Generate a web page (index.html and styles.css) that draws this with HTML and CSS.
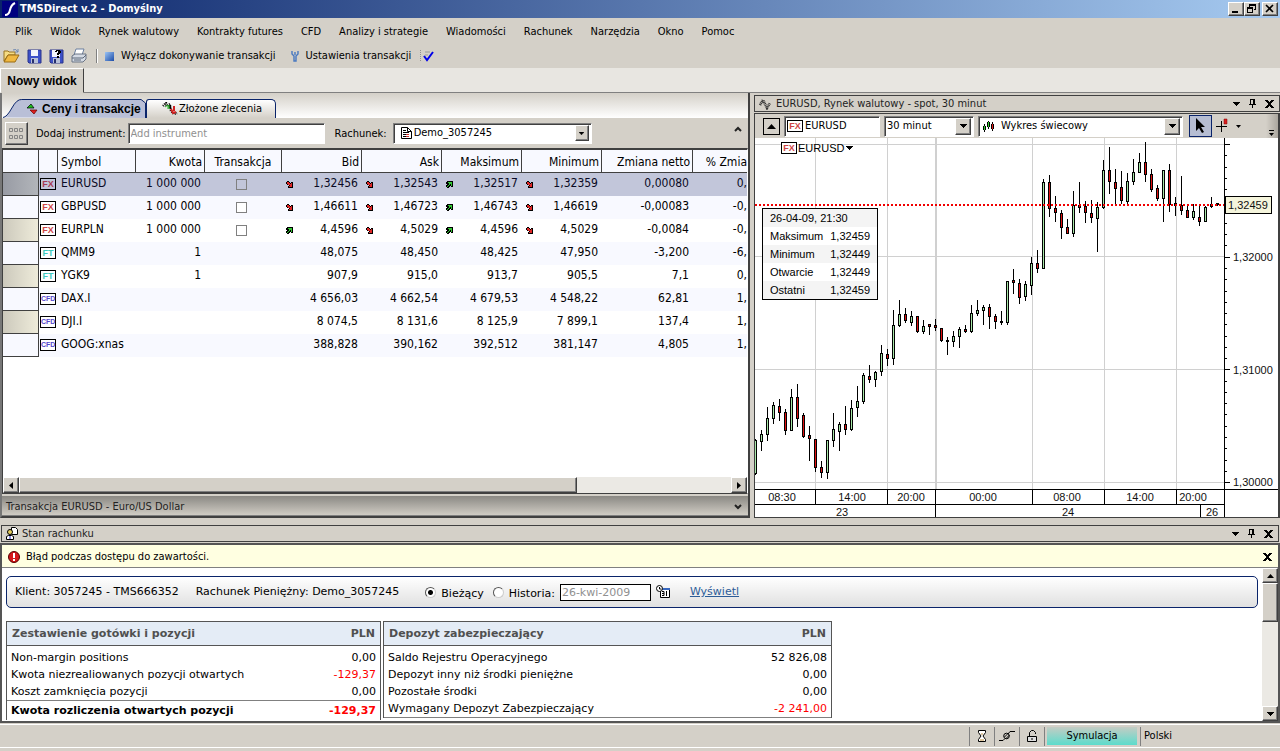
FILE: index.html
```html
<!DOCTYPE html>
<html lang="pl">
<head>
<meta charset="utf-8">
<title>TMSDirect v.2 - Domyślny</title>
<link rel="stylesheet" href="styles.css">
</head>
<body>
<svg class="defs" width="0" height="0" aria-hidden="true">
  <symbol id="down" viewBox="0 0 7 7"><path d="M1 0h2v1h1v1h1V1h2v6H2V5h1V4H1V3H0V1h1z" fill="#000"/><path d="M1 1h2v1h1v1h1V2h1v4H3V5h1V4H2V3H1z" fill="#e02828"/></symbol>
  <symbol id="up" viewBox="0 0 7 7"><path d="M1 0h6v6H5V5H4v1H3v1H1V6H0V4h1V3H0V1h1z" fill="#000"/><path d="M2 1h4v4H5V3H4v1H3v1H2v1H1V5h1V4h1V2H2z" fill="#32c832"/></symbol>
  <symbol id="tri" viewBox="0 0 7 4"><path d="M0 0h7v1H6v1H5v1H4v1H3V3H2V2H1V1H0z"/></symbol>
  <symbol id="x" viewBox="0 0 9 8"><path d="M0 0h3v1h1v1h1V1h1V0h3v1H8v1H7v1H6v2h1v1h1v1h1v1H6V7H5V6H4v1H3v1H0V7h1V6h1V5h1V3H2V2H1V1H0z"/></symbol>
  <symbol id="pin" viewBox="0 0 7 9"><path d="M1 0h5v5h1v1H4v3H3V6H0V5h1zM2 1v4h2V1z"/></symbol>
  <symbol id="candles" viewBox="0 0 12 11"><path d="M1 3h1v2h1v4H2v2H1V9H0V5h1zM5 0h1v1h1v5H6v2H5V6H4V1h1zM9 1h1v2h1v5h-1v2H9V8H8V3h1z"/><path d="M1 5h1v4H1zM5 1h1v5H5z" fill="#2fd02f"/><path d="M9 3h1v5H9z" fill="#e02020"/></symbol>
</svg>

<header class="titlebar">
  <svg class="logo" viewBox="0 0 16 16"><rect width="16" height="16" fill="#000080"/><path d="M3 14Q7 14 8 9T13 2" fill="none" stroke="#fff" stroke-width="2"/></svg>
  <h1>TMSDirect v.2 - Domyślny</h1>
  <div class="winbtns">
    <button class="btn" aria-label="Minimalizuj"><svg width="12" height="10" viewBox="0 0 12 10"><path d="M2 7h6v2H2z"/></svg></button>
    <button class="btn" aria-label="Przywróć"><svg width="12" height="10" viewBox="0 0 12 10"><path d="M3 0h7v6H8V5h1V2H4v1H3zM1 3h6v6H1zM2 5v3h4V5z" fill-rule="evenodd"/></svg></button>
    <button class="btn close" aria-label="Zamknij"><svg width="12" height="10" viewBox="0 0 12 10"><path d="M2 1l7 7M9 1L2 8" stroke="#000" stroke-width="1.6"/></svg></button>
  </div>
</header>

<nav class="menu">
  <button>Plik</button><button>Widok</button><button>Rynek walutowy</button><button>Kontrakty futures</button><button>CFD</button><button>Analizy i strategie</button><button>Wiadomości</button><button>Rachunek</button><button>Narzędzia</button><button>Okno</button><button>Pomoc</button>
</nav>

<div class="toolbar">
  <button aria-label="Otwórz"><svg width="17" height="16" viewBox="0 0 17 16"><path d="M1 3h4l1 1h6v3H5L1 13z" fill="#f5dc84" stroke="#9a7420"/><path d="M5 7h11l-4 7H1z" fill="#f0b840" stroke="#9a6c14"/><path d="M10 2q3-2 5 2M15 1v3h-3" fill="none" stroke="#6d87b0"/></svg></button>
  <button aria-label="Zapisz"><svg width="15" height="15" viewBox="0 0 15 15"><path d="M1 1h13v13H2l-1-1z" fill="#3c50c8" stroke="#2a348c"/><path d="M4 1h7v6H4z" fill="#f2f4fc"/><path d="M4 9h7v5H4z" fill="#b8c0d8"/><path d="M5 10h2v4H5z" fill="#27306e"/></svg></button>
  <button aria-label="Zapisz jako"><svg width="15" height="15" viewBox="0 0 15 15"><path d="M1 1h13v13H2l-1-1z" fill="#3c50c8" stroke="#2a348c"/><path d="M3 1h8v7H3z" fill="#f2f4fc"/><path d="M4 9h7v5H4z" fill="#b8c0d8"/><path d="M5 10h2v4H5z" fill="#27306e"/><path d="M7 1h4v1h1v2h-1v1h-1v1H8V4h1V2H8v1H6V2h1zM8 7h2v2H8z"/></svg></button>
  <button aria-label="Drukuj"><svg width="16" height="16" viewBox="0 0 16 16"><path d="M5 1h8l-2 6H3z" fill="#fff" stroke="#6b7f9f"/><path d="M1 8l3-2h11v5l-3 3H1z" fill="#d4dae4" stroke="#6a7484"/><path d="M1 10h11l3-3M3 12h7" fill="none" stroke="#5c6878"/></svg></button>
  <span class="sep"></span>
  <button><svg width="9" height="9" viewBox="0 0 9 9"><defs><linearGradient id="sq" x2="1" y2="1"><stop stop-color="#9cc4f4"/><stop offset="1" stop-color="#1c4ca8"/></linearGradient></defs><rect width="9" height="9" fill="url(#sq)"/></svg><span>Wyłącz dokonywanie transakcji</span></button>
  <button class="settings"><svg width="8" height="11" viewBox="0 0 8 11"><path d="M1 0v3l2 2v5h2V5l2-2V0M4 1v3" fill="none" stroke="#4878c0" stroke-width="1.4"/></svg><span>Ustawienia transakcji</span></button>
  <button class="check" aria-label="Sprawdź"><svg width="14" height="12" viewBox="0 0 14 12"><path d="M.5 0v12" stroke="#909090" stroke-dasharray="1 1"/><path d="M5 2h5M5 5h3" stroke="#999"/><path d="M4 6l3 4 6-8" fill="none" stroke="#0000e8" stroke-width="2"/></svg></button>
</div>

<div class="views"><button>Nowy widok</button></div>

<main class="work">
  <section class="prices">
    <div class="tabs">
      <button class="tab active"><svg class="shape" viewBox="0 0 145 19" preserveAspectRatio="none"><path d="M0 18.500Q4 18 9 9T19 .5H140L144.500 4V19" fill="#b9bfd7" stroke="#0a246a"/></svg><svg width="12" height="12" viewBox="0 0 12 12"><path d="M1 5l4-4 3 4z" fill="#20c020" stroke="#000" stroke-width=".7"/><path d="M4 7h7l-3 4z" fill="#e02020" stroke="#600"  stroke-width=".7"/></svg><span>Ceny i transakcje</span></button>
      <button class="tab"><svg width="16" height="14" viewBox="0 0 16 14"><path d="M1 4l3-3 1 3 3-2v5M8 4l1 5 3 3 3-1" fill="none" stroke="#000" stroke-width="2.400" stroke-dasharray="1 1"/><path d="M3 5l3-2v4M7 3v4" fill="none" stroke="#27b427"/><path d="M9 7l2 4 3-1M12 4v5" fill="none" stroke="#d02020" stroke-width="2"/></svg><span>Złożone zlecenia</span></button>
    </div>
    <div class="filters">
      <button class="btn grid-btn" aria-label="Siatka"><svg width="15" height="13" viewBox="0 0 15 13"><path d="M.5 1.500h3v3h-3zM5.500 1.500h3v3h-3zM10.500 1.500h3v3h-3zM.5 8.500h3v3h-3zM5.500 8.500h3v3h-3zM10.500 8.500h3v3h-3z" fill="none" stroke="#858585"/></svg></button>
      <label for="add">Dodaj instrument:</label>
      <input id="add" class="sunk" type="text" placeholder="Add instrument">
      <label for="acc">Rachunek:</label>
      <div class="combo acc"><svg width="11" height="12" viewBox="0 0 11 12"><path d="M.5.5h6l4 4v7H.5zM6.500.5v4h4" fill="#fff" stroke="#000"/><path d="M2 3.500h3M2 5.500h6M2 7.500h3M2 9.500h3" stroke="#000"/><path d="M5 7.500h3M5 9.500h3" stroke="#d03030"/></svg><select id="acc"><option>Demo_3057245</option></select><span class="btn"><svg width="5" height="3" viewBox="0 0 7 4"><use href="#tri"/></svg></span></div>
      <button class="collapse" aria-label="Zwiń"><svg width="8" height="6" viewBox="0 0 8 6"><path d="M1 5l3-3 3 3" fill="none" stroke="#222" stroke-width="2"/></svg></button>
    </div>
    <div class="sheet">
      <table class="quotes">
        <colgroup><col class="c-head"><col class="c-ico"><col class="c-sym"><col class="c-amt"><col class="c-tr"><col class="c-q"><col class="c-q"><col class="c-q"><col class="c-q"><col class="c-net"><col></colgroup>
        <thead><tr><th></th><th></th><th class="l">Symbol</th><th>Kwota</th><th class="c">Transakcja</th><th>Bid</th><th>Ask</th><th>Maksimum</th><th>Minimum</th><th>Zmiana netto</th><th>% Zmia</th></tr></thead>
        <tbody>
        <tr class="sel"><td></td><td><i class="badge fx">FX</i></td><td class="l">EURUSD</td><td>1 000 000</td><td class="c"><input type="checkbox" aria-label="EURUSD"></td><td><svg><use href="#down"/></svg>1,32456</td><td><svg><use href="#down"/></svg>1,32543</td><td><svg><use href="#up"/></svg>1,32517</td><td><svg><use href="#down"/></svg>1,32359</td><td>0,00080</td><td>0,</td></tr>
        <tr><td></td><td><i class="badge fx">FX</i></td><td class="l">GBPUSD</td><td>1 000 000</td><td class="c"><input type="checkbox" aria-label="GBPUSD"></td><td><svg><use href="#down"/></svg>1,46611</td><td><svg><use href="#down"/></svg>1,46723</td><td><svg><use href="#up"/></svg>1,46743</td><td><svg><use href="#down"/></svg>1,46619</td><td>-0,00083</td><td>-0,</td></tr>
        <tr><td></td><td><i class="badge fx">FX</i></td><td class="l">EURPLN</td><td>1 000 000</td><td class="c"><input type="checkbox" aria-label="EURPLN"></td><td><svg><use href="#up"/></svg>4,4596</td><td><svg><use href="#down"/></svg>4,5029</td><td><svg><use href="#up"/></svg>4,4596</td><td><svg><use href="#down"/></svg>4,5029</td><td>-0,0084</td><td>-0,</td></tr>
        <tr><td></td><td><i class="badge ft">FT</i></td><td class="l">QMM9</td><td>1</td><td></td><td>48,075</td><td>48,450</td><td>48,425</td><td>47,950</td><td>-3,200</td><td>-6,</td></tr>
        <tr><td></td><td><i class="badge ft">FT</i></td><td class="l">YGK9</td><td>1</td><td></td><td>907,9</td><td>915,0</td><td>913,7</td><td>905,5</td><td>7,1</td><td>0,</td></tr>
        <tr><td></td><td><i class="badge cfd">CFD</i></td><td class="l">DAX.I</td><td></td><td></td><td>4 656,03</td><td>4 662,54</td><td>4 679,53</td><td>4 548,22</td><td>62,81</td><td>1,</td></tr>
        <tr><td></td><td><i class="badge cfd">CFD</i></td><td class="l">DJI.I</td><td></td><td></td><td>8 074,5</td><td>8 131,6</td><td>8 125,9</td><td>7 899,1</td><td>137,4</td><td>1,</td></tr>
        <tr><td></td><td><i class="badge cfd">CFD</i></td><td class="l">GOOG:xnas</td><td></td><td></td><td>388,828</td><td>390,162</td><td>392,512</td><td>381,147</td><td>4,805</td><td>1,</td></tr>
        </tbody>
      </table>
      <div class="hscroll"><button class="btn" aria-label="W lewo"><svg width="4" height="7" viewBox="0 0 4 7"><path d="M4 0v7L0 3.500z"/></svg></button><span class="btn thumb"></span><button class="btn end" aria-label="W prawo"><svg width="4" height="7" viewBox="0 0 4 7"><path d="M0 0v7l4-3.500z"/></svg></button></div>
    </div>
    <button class="trade"><span>Transakcja EURUSD - Euro/US Dollar</span><svg width="8" height="6" viewBox="0 0 8 6"><path d="M1 1l3 3 3-3" fill="none" stroke="#222" stroke-width="2"/></svg></button>
  </section>

  <section class="chart">
    <div class="caption"><svg width="13" height="12" viewBox="0 0 13 12"><path d="M1 7l3-5 4 8 3-5" fill="none" stroke="#333" stroke-width="2.600" stroke-dasharray="1 .6"/></svg><h2>EURUSD, Rynek walutowy - spot, 30 minut</h2>
      <button aria-label="Menu"><svg width="7" height="4"><use href="#tri"/></svg></button><button aria-label="Przypnij"><svg width="7" height="9"><use href="#pin"/></svg></button><button aria-label="Zamknij"><svg width="9" height="8"><use href="#x"/></svg></button></div>
    <div class="pane">
      <div class="chartbar">
        <button class="flat" aria-label="W górę"><svg width="9" height="5" viewBox="0 0 9 5"><path d="M4.500 0L9 5H0z"/></svg></button>
        <div class="combo sym"><i class="badge fx">FX</i><input type="text" value="EURUSD" aria-label="Instrument"></div>
        <div class="combo per"><select aria-label="Okres"><option>30 minut</option></select><span class="btn"><svg width="7" height="4"><use href="#tri"/></svg></span></div>
        <div class="combo kind"><svg width="12" height="11"><use href="#candles"/></svg><select aria-label="Typ wykresu"><option>Wykres świecowy</option></select><span class="btn"><svg width="7" height="4"><use href="#tri"/></svg></span></div>
        <button class="pointer" aria-label="Wskaźnik"><svg width="11" height="16" viewBox="0 0 11 16"><path d="M1 0l9 9H6l3 5-2 1-3-5-3 3z"/></svg></button>
        <button class="cross" aria-label="Krzyż"><svg width="25" height="16" viewBox="0 0 25 16"><path d="M0 8.500h11M5.500 3v11" stroke="#000"/><path d="M8 1h3v5H8z" fill="#d82020" stroke="#800" stroke-width=".5"/><path d="M20 7h5l-2.500 3z"/></svg></button>
        <button class="more" aria-label="Więcej"><svg width="5" height="7" viewBox="0 0 5 7"><path d="M0 0h5v1H0zM0 3h5L2.500 6z"/></svg></button>
      </div>
      <div class="plot">
        <svg id="plot" viewBox="0 0 523 381" preserveAspectRatio="xMinYMin meet" shape-rendering="crispEdges">
          <path class="grid" d="M0 6.500h469M0 118.500h469M0 231.500h469M0 344.500h469M60.500 0v351M132.500 0v351M277.500 0v351M349.500 0v351M421.500 0v351"/>
          <path class="grid day" d="M181 0v351"/>
          <g id="candle-layer"></g>
          <path class="last" d="M0 67h470"/>
          <path class="axis" d="M469.500 0v381M0 351.500h523M0 366.500h469M60.500 351v15M132.500 351v15M180.500 351v30M277.500 351v15M349.500 351v15M421.500 351v15M445.500 366v15"/>
          <path class="axis" id="ticks" d=""/>
          <rect x="470.500" y="58.500" width="46" height="17" fill="#f5f5dc" stroke="#000"/>
          <g class="price"><text x="473" y="71">1,32459</text><text x="478" y="123">1,32000</text><text x="478" y="236">1,31000</text><text x="478" y="348">1,30000</text></g>
          <g class="time"><text x="27" y="363">08:30</text><text x="97" y="363">14:00</text><text x="156" y="363">20:00</text><text x="228" y="363">00:00</text><text x="312" y="363">08:00</text><text x="385" y="363">14:00</text><text x="438" y="363">20:00</text><text x="87" y="378">23</text><text x="313" y="378">24</text><text x="457" y="378">26</text></g>
        </svg>
        <button class="series"><i class="badge fx">FX</i><span>EURUSD</span><svg width="7" height="4"><use href="#tri"/></svg></button>
        <dl class="tip"><div><dt>26-04-09, 21:30</dt></div><div><dt>Maksimum</dt><dd>1,32459</dd></div><div><dt>Minimum</dt><dd>1,32449</dd></div><div><dt>Otwarcie</dt><dd>1,32449</dd></div><div><dt>Ostatni</dt><dd>1,32459</dd></div></dl>
      </div>
    </div>
  </section>
</main>

<section class="account">
  <div class="caption"><svg width="12" height="13" viewBox="0 0 12 13"><path d="M5.500.5h4l2 2v5h-6z" fill="#fff" stroke="#000"/><circle cx="4" cy="5" r="2.500" fill="#e8d060" stroke="#000"/><path d="M.5 12.500v-3l2-1h3l2 1v3z" fill="#fff" stroke="#000"/><path d="M4 9v3" stroke="#22c"/></svg><h2>Stan rachunku</h2>
    <button aria-label="Menu"><svg width="7" height="4"><use href="#tri"/></svg></button><button aria-label="Przypnij"><svg width="7" height="9"><use href="#pin"/></svg></button><button aria-label="Zamknij"><svg width="9" height="8"><use href="#x"/></svg></button></div>
  <div class="body">
    <div class="alert" role="alert"><svg width="12" height="12" viewBox="0 0 12 12"><circle cx="6" cy="6" r="5.500" fill="#d41818" stroke="#500"/><path d="M5 2h2v5H5zM5 8h2v2H5z" fill="#fff"/></svg><span>Błąd podczas dostępu do zawartości.</span><button aria-label="Zamknij"><svg width="9" height="8"><use href="#x"/></svg></button></div>
    <div class="scroller">
      <div class="content">
        <form class="query">
          <span>Klient: 3057245 - TMS666352</span><span>Rachunek Pieniężny: Demo_3057245</span>
          <label class="cur"><input type="radio" name="r" checked>Bieżący</label><label><input type="radio" name="r">Historia:</label>
          <input class="date" type="text" placeholder="26-kwi-2009" aria-label="Data">
          <button type="button" aria-label="Kalendarz"><svg width="14" height="14" viewBox="0 0 14 14"><path d="M4.500 3.500h9v9h-9z" fill="#fff" stroke="#000"/><path d="M5 3h9v2H5z" fill="#3868c0"/><path d="M6 6.500h2v4H6M6 8.500h2M10.500 6v5" fill="none" stroke="#000"/><circle cx="3.500" cy="3.500" r="3" fill="#fff" stroke="#000"/><path d="M3.500 2v2h2" fill="none" stroke="#000"/></svg></button>
          <a href="#">Wyświetl</a>
        </form>
        <div class="tables">
          <table class="cash"><thead><tr><th>Zestawienie gotówki i pozycji</th><th>PLN</th></tr></thead><tbody>
            <tr><td>Non-margin positions</td><td>0,00</td></tr>
            <tr><td>Kwota niezrealiowanych pozycji otwartych</td><td class="neg">-129,37</td></tr>
            <tr><td>Koszt zamknięcia pozycji</td><td>0,00</td></tr>
            <tr class="sum"><td>Kwota rozliczenia otwartych pozycji</td><td class="neg">-129,37</td></tr></tbody></table>
          <table class="margin"><thead><tr><th>Depozyt zabezpieczający</th><th>PLN</th></tr></thead><tbody>
            <tr><td>Saldo Rejestru Operacyjnego</td><td>52 826,08</td></tr>
            <tr><td>Depozyt inny niż środki pieniężne</td><td>0,00</td></tr>
            <tr><td>Pozostałe środki</td><td>0,00</td></tr>
            <tr class="line"><td>Wymagany Depozyt Zabezpieczający</td><td class="neg">-2 241,00</td></tr></tbody></table>
        </div>
      </div>
      <div class="vscroll"><button class="btn" aria-label="W górę"><svg width="7" height="4" viewBox="0 0 7 4"><path d="M3.500 0L7 4H0z"/></svg></button><span class="btn thumb"></span><button class="btn end" aria-label="W dół"><svg width="7" height="4"><use href="#tri"/></svg></button></div>
    </div>
  </div>
</section>

<footer class="status">
  <span class="cell"><svg width="8" height="12" viewBox="0 0 8 12"><path d="M.5.5h7v2l-2.500 3.500 2.500 3.500v2h-7v-2L3 6 .5 2.500z" fill="#fff" stroke="#000"/><path d="M3 4h2M2 10h4" stroke="#c09040"/></svg></span>
  <span class="cell"><svg width="16" height="12" viewBox="0 0 16 12"><path d="M0 10.500h4l2-2M9 4l2-2.500h5M5.500 7l3-3M6.500 9l4-4" fill="none" stroke="#000"/><circle cx="7.500" cy="6" r="2.800" fill="none" stroke="#000"/></svg></span>
  <span class="cell"><svg width="11" height="13" viewBox="0 0 11 13"><path d="M2.500 7V2.500l2-2h2l2 2V4" fill="none" stroke="#000"/><path d="M.5 6.500h9v5h-9z" fill="#ddd" stroke="#000"/><path d="M5 8v2" stroke="#000"/></svg></span>
  <span class="cell wide"><b>Symulacja</b></span>
  <span class="cell lang">Polski</span>
</footer>
<script src="chart.js"></script>
</body>
</html>
```

FILE: styles.css
```css
:root {
  --face: #d4d0c8;
  --dark: #404040;
  --mid: #808080;
  --navy: #0a246a;
  --ui: "DejaVu Sans Condensed", "Noto Sans", sans-serif;
  --wide: "DejaVu Sans", sans-serif;
  --plain: "Liberation Sans", sans-serif;
}
* { box-sizing: border-box; }
body {
  margin: 0; min-height: 100vh; overflow: hidden;
  display: flex; flex-direction: column;
  background: var(--face); color: #000;
  font: 11px/14px var(--ui);
}
button, input, select { font: inherit; color: inherit; }
button { margin: 0; padding: 0; border: 0; background: none; white-space: nowrap; }
h1, h2, dl, dd { margin: 0; font: inherit; }
svg { display: block; flex: none; }
.defs { position: absolute; }
.btn {
  display: flex; align-items: center; justify-content: center; flex: none;
  background: var(--face);
  border: 1px solid; border-color: #fff var(--dark) var(--dark) #fff;
  box-shadow: inset -1px -1px var(--mid);
}
.badge {
  display: block; flex: none; width: 16px; height: 12px;
  border: 1px solid #000; background: #fff;
  font: bold 9px/10px var(--plain); text-align: center;
}
.fx { color: #cf4646; }
.ft { color: #3fc9bd; }
.cfd { color: #5548cc; font-size: 7px; }

.titlebar {
  display: flex; align-items: center; height: 18px; padding: 0 2px;
  background: linear-gradient(90deg, #0a246a, #a6caf0);
}
.logo { width: 16px; height: 16px; }
.titlebar h1 { flex: 1; padding-left: 2px; color: #fff; font-weight: bold; }
.winbtns { display: flex; }
.winbtns .btn { width: 16px; height: 14px; }
.winbtns .close { margin-left: 2px; }

.menu { display: flex; gap: 18px; height: 26px; padding: 2px 15px 0; align-items: center; }
.toolbar { display: flex; align-items: center; height: 24px; gap: 7px; padding: 0 3px; }
.toolbar button { display: flex; align-items: center; gap: 7px; }
.toolbar .sep { width: 2px; height: 14px; margin-left: 2px; background: linear-gradient(90deg, var(--mid) 50%, #fff 50%); }
.toolbar .settings { margin-left: 8px; }
.toolbar .check { margin-left: 2px; }

.views { display: flex; height: 25px; background: #e8e6e1; }
.views::after { content: ""; flex: 1; border-bottom: 1px solid var(--mid); }
.views button {
  width: 84px; background: var(--face); font: bold 12px/14px var(--plain);
  border: 1px solid; border-color: #fff var(--dark) transparent #fff;
}

.work {
  flex: 1 1 0; display: grid; gap: 4px; min-height: 0;
  grid-template-columns: 750fr 526fr; grid-template-rows: minmax(0, 1fr);
}
.prices {
  display: flex; flex-direction: column; min-width: 0; min-height: 0;
  border: solid var(--dark); border-width: 0 2px 2px 2px; border-left-color: #777;
}
.tabs {
  display: flex; align-items: flex-end; height: 25px; padding-left: 1px;
  background: linear-gradient(var(--face), #fff);
}
.tab {
  position: relative; display: flex; align-items: center; justify-content: center; gap: 1px;
  width: 130px; height: 19px; padding-left: 2px; background: linear-gradient(#fff, var(--face));
  border: 1px solid var(--navy); border-bottom: 0; border-radius: 3px 5px 0 0;
}
.tab.active {
  width: 143px; padding: 0 4px 0 23px; justify-content: flex-start; gap: 4px;
  background: none; border: 0; font: bold 12px/14px var(--plain);
}
.tab .shape { position: absolute; inset: 0; width: 100%; height: 100%; }
.tab > :not(.shape) { position: relative; }
.filters { display: flex; align-items: center; height: 30px; padding: 0 6px 0 3px; }
.filters label { padding-top: 2px; }
.grid-btn { width: 23px; height: 23px; margin-right: 8px; }
.sunk, .combo {
  height: 21px; background: #fff; border: 1px solid;
  border-color: var(--mid) #fff #fff var(--mid); box-shadow: inset 1px 1px var(--dark);
}
#add { width: 197px; min-width: 0; margin: 0 10px 0 2px; padding: 0 2px; }
#add::placeholder, .date::placeholder { color: #909090; opacity: 1; }
.combo { display: flex; align-items: center; padding: 2px; min-width: 0; }
.combo select, .combo input {
  flex: 1; min-width: 0; padding: 0 2px; border: 0; background: none; appearance: none; outline: 0;
}
.combo .btn { width: 16px; height: 17px; margin-left: -16px; pointer-events: none; }
.acc { width: 199px; margin-left: 6px; padding-left: 7px; }
.acc .btn { width: 14px; height: 16px; }
.collapse { margin: 0 0 8px auto; }

.sheet {
  flex: 1; display: flex; flex-direction: column; min-height: 0; overflow: hidden;
  border: solid var(--dark); border-width: 2px 1px 1px 1px; border-right-color: #fff; background: #fff;
}
.quotes {
  width: 100%; table-layout: fixed; border-collapse: separate; border-spacing: 0;
  font: 12px/14px var(--ui);
}
.c-head { width: 36px; } .c-ico { width: 19px; } .c-sym { width: 78px; } .c-amt { width: 69px; }
.c-tr { width: 77px; } .c-q { width: 80px; } .c-net { width: 91px; }
.quotes th, .quotes td { height: 23px; padding: 0 4px; text-align: right; white-space: nowrap; }
.quotes th { font-weight: normal; padding: 1px 2px 0; background: #f8f9ff; border: solid var(--dark); border-width: 0 1px 1px 0; }
.quotes th:last-child { padding: 1px 0 0; border-right: 0; }
.quotes td:last-child { padding-right: 0; }
.quotes .l { text-align: left; padding-left: 3px; }
.quotes .c { text-align: center; }
.quotes td { padding-bottom: 3px; }
.quotes td .badge { margin: 2px 0 0 -3px; }
.quotes td svg { float: left; width: 7px; height: 7px; margin-top: 5px; }
.quotes tr:nth-child(even) td { background: #f8f9ff; }
.quotes tbody tr td:first-child { border: solid var(--dark); border-width: 0 1px 1px 0; background: linear-gradient(90deg, #ccc9bc, #eeebda); }
.quotes tbody tr:nth-child(even) td:first-child { background: #f8f9ff; }
.quotes tbody .sel td { background: #c2c6da; color: #0a0a24; }
.quotes tbody .sel td:first-child { background: linear-gradient(90deg, #989ba4, #b2b5ba); }
.quotes .sel .badge { background: #c2c6da; color: #a83c54; }
input[type=checkbox] {
  appearance: none; display: inline-block; width: 11px; height: 11px; margin: 3px 4px 0 0;
  border: 1px solid var(--mid); background: #fff; vertical-align: top;
}
.sel input[type=checkbox] { background: #c2c6da; }
.hscroll { display: flex; height: 16px; margin-top: auto; background: #ebe9e4; }
.hscroll .btn { width: 16px; }
.hscroll .thumb { width: 75%; }
.end { margin: 0 0 0 auto; }
.trade {
  display: flex; align-items: center; justify-content: space-between; height: 20px;
  margin-top: 2px; padding: 2px 6px 0 4px; color: #222;
  background: linear-gradient(#8a8883, #d0ccc4); border-bottom: 1px solid var(--mid);
}

.chart { display: flex; flex-direction: column; min-width: 0; min-height: 0; padding-top: 2px; }
.caption {
  display: flex; align-items: center; gap: 9px; height: 17px; padding: 0 5px 0 4px;
  border: 1px solid var(--dark); color: #222;
}
.caption h2 { flex: 1; margin-left: -5px; }
.pane {
  flex: 1; display: flex; flex-direction: column; min-height: 0; margin-top: 1px;
  border: 1px solid var(--dark); border-right-width: 2px; background: #fff;
}
.chartbar { display: flex; align-items: center; gap: 4px; height: 24px; padding-left: 8px; background: var(--face); }
.flat { display: flex; align-items: center; justify-content: center; width: 17px; height: 17px; border: 1px solid #000; }
.sym { flex: 0 1 96px; } .per { flex: 0 1 90px; } .kind { flex: 0 1 205px; padding-left: 4px; }
.kind select { padding-left: 6px; }
.per select { padding-left: 0; }
.pointer { display: flex; align-items: center; justify-content: center; width: 23px; height: 22px; margin-left: 2px; background: #b6bdd2; border: 1px solid var(--navy); }
.more { align-self: stretch; width: 12px; margin-left: auto; padding: 15px 0 0 3px; background: linear-gradient(90deg, #d4d0c8, #aaa69e); }
.plot { position: relative; flex: 1; min-height: 0; overflow: hidden; }
#plot { width: 100%; }
#plot text { font: 11px var(--plain); fill: #111; }
.time { text-anchor: middle; }
.grid { stroke: #d0d0d0; fill: none; }
.day { stroke-width: 2; }
.axis { stroke: #000; fill: none; }
.last { stroke: #f00000; stroke-width: 2; stroke-dasharray: 2 2; }
.wick { stroke: #000; }
.body-up { fill: #a8e8a8; stroke: #000; }
.body-down { fill: #e01010; stroke: #000; }
.series { position: absolute; left: 26px; top: 4px; display: flex; align-items: center; gap: 1px; font: 11px/12px var(--plain); }
.series svg { margin-left: 1px; }
.tip {
  position: absolute; left: 7px; top: 70px; width: 116px; border: 1px solid #000;
  background: #fff; font: 11px/18px var(--plain);
}
.tip div { display: flex; justify-content: space-between; padding: 0 7px; }
.tip div:nth-child(odd) { background: #f4f4f4; }

.account { display: flex; flex-direction: column; height: 198px; margin-top: 7px; }
.account .caption { margin: 0 1px; }
.account .body {
  flex: 1; display: flex; flex-direction: column; min-height: 0; margin-top: 1px;
  border: 2px solid #555; background: #fff;
}
.alert {
  display: flex; align-items: center; gap: 6px; height: 23px; padding: 1px 6px 0;
  background: #ffffe1; border-bottom: 1px solid var(--mid);
}
.alert button { margin-left: auto; }
.scroller { flex: 1; display: flex; min-height: 0; overflow: hidden; }
.content { flex: 1; min-width: 0; padding: 8px 4px 0; font: 11px/14px var(--wide); }
.query {
  display: flex; align-items: center; height: 32px; padding: 0 8px; white-space: nowrap;
  border: 1px solid var(--navy); border-radius: 5px; background: linear-gradient(#fff, #e0e0e0);
}
.query > span { margin-right: 17px; }
.query label { display: flex; align-items: center; margin-right: 5px; padding-top: 3px; }
.query .cur { margin-left: 5px; }
.query input[type=radio] {
  appearance: none; width: 11px; height: 11px; margin: 0 5px 3px 4px; border-radius: 50%;
  border: 1px solid; border-color: #555 #ccc #ccc #555; background: #fff;
}
.query input[type=radio]:checked { background: radial-gradient(circle, #000 2px, #fff 3px); }
.date { width: 91px; height: 17px; margin-right: 5px; padding: 0 1px; border: 1px solid #000; }
.query a { margin-left: 20px; color: #2c5c98; }
.tables { display: flex; gap: 2px; margin-top: 13px; align-items: flex-start; }
.tables table { border: 1px solid #555; border-bottom: 0; border-spacing: 0; }
.cash { width: 375px; } .margin { width: 449px; }
.tables th { height: 24px; padding: 0 5px; text-align: left; color: #505050; background: #e4ecf6; border-bottom: 1px solid #555; }
.tables td { height: 17px; padding: 0 4px; }
.tables th:last-child, .tables td:last-child { text-align: right; }
.tables tbody tr:first-child td { height: 20px; padding-top: 3px; }
.tables .neg { color: #f00; }
.tables .sum td { height: 20px; border-top: 1px solid var(--mid); font-weight: bold; }
.tables .line td { height: 18px; border-bottom: 1px solid var(--mid); }
.vscroll { display: flex; flex-direction: column; width: 16px; background: #ebe9e4; }
.vscroll .btn { height: 15px; }
.vscroll .thumb { height: 39px; }
.vscroll .btn.end { margin: auto 0 0; }

.status {
  display: flex; align-items: center; height: 24px; margin: 1px 0 3px; padding-right: 108px;
  border-top: 1px solid #fff; border-bottom: 1px solid #fff; justify-content: flex-end;
}
.cell { display: flex; align-items: center; justify-content: center; width: 25px; height: 19px; border-left: 1px solid var(--mid); }
.wide { width: 96px; padding: 0 3px 0 2px; }
.wide b { flex: 1; font-weight: normal; text-align: center; line-height: 18px; background: linear-gradient(#c4ccc4, #5cdccc); }
.lang { width: 32px; padding-left: 3px; }
```

FILE: chart.js
```js
// high, body top, body bottom, low, rising
const candles = [
[301,302,336,337,1],[292,296,304,313,1],[269,280,297,303,1],[264,267,281,286,1],[261,268,275,283,0],[271,274,293,297,0],[251,259,293,293,1],[246,259,281,289,0],[275,277,299,300,0],[288,297,301,323,0],
[301,301,330,334,0],[323,329,335,340,0],[302,302,335,341,1],[275,291,303,309,1],[284,286,294,313,1],[268,286,292,297,0],[262,270,292,293,1],[248,263,270,279,1],[235,237,264,266,1],[227,238,242,245,0],
[233,234,242,249,1],[207,215,234,238,1],[211,216,221,228,0],[172,187,221,227,1],[162,176,188,189,1],[170,176,183,185,0],[173,178,185,188,1],[178,178,194,195,0],[182,188,194,196,1],[186,186,189,197,0],
[181,187,190,193,0],[190,190,203,204,0],[199,202,204,217,0],[193,198,204,209,1],[189,191,199,210,1],[187,191,194,195,0],[167,175,194,195,1],[162,172,176,178,1],[167,169,173,187,1],[166,169,179,191,0],
[176,178,184,191,0],[173,183,185,187,0],[143,143,185,187,1],[131,142,145,156,0],[141,145,160,166,0],[143,146,159,163,1],[119,125,148,157,1],[112,125,131,135,0],[41,44,131,131,1],[37,44,71,79,0],
[58,70,75,84,0],[72,75,90,101,0],[81,89,96,96,0],[53,67,96,99,1],[44,67,70,75,0],[63,68,75,85,0],[62,75,80,85,0],[64,69,81,114,1],[22,32,70,71,1],[9,32,44,56,0],
[31,44,51,66,0],[33,49,63,66,0],[35,43,64,66,1],[21,34,44,47,1],[15,24,35,35,1],[4,24,37,44,0],[31,36,52,54,0],[47,50,61,63,0],[32,32,61,84,1],[26,32,67,74,0],
[59,65,68,78,0],[38,67,73,77,0],[68,72,80,80,0],[66,73,80,82,1],[68,79,84,88,0],[68,69,84,84,1],[59,66,69,70,0],[65,65,67,68,0]
];
const ns = "http://www.w3.org/2000/svg";
const layer = document.getElementById("candle-layer");
candles.forEach(([high, top, bottom, low, up], i) => {
  const x = i * 6;
  const wick = document.createElementNS(ns, "path");
  wick.setAttribute("class", "wick");
  wick.setAttribute("d", `M${x + 0.5} ${high}V${low}`);
  const body = document.createElementNS(ns, "rect");
  body.setAttribute("class", up ? "body-up" : "body-down");
  body.setAttribute("x", x - 0.5);
  body.setAttribute("y", top + 0.5);
  body.setAttribute("width", 2);
  body.setAttribute("height", Math.max(1, bottom - top - 1));
  layer.append(wick, body);
});
let ticks = "";
for (let k = 0; k <= 30; k++) {
  ticks += `M470 ${Math.round(6 + k * 11.27) + 0.5}h${k % 10 ? 2 : 5}`;
}
document.getElementById("ticks").setAttribute("d", ticks);
```
